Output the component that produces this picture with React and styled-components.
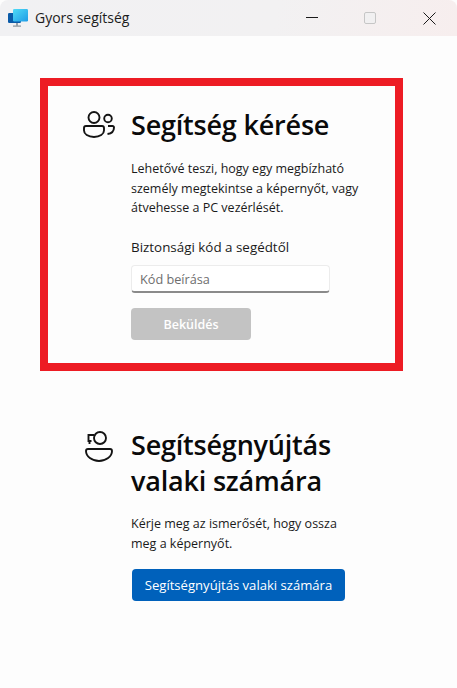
import React from "react";
import styled, { createGlobalStyle } from "styled-components";

const GlobalStyle = createGlobalStyle`
  html, body {
    margin: 0;
    padding: 0;
    background: #fdfdfd;
    font-family: "Open Sans", "Noto Sans", sans-serif;
    color: #1a1a1a;
  }
`;

const Window = styled.div`
  width: 457px;
  height: 688px;
  display: flex;
  flex-direction: column;
  overflow: hidden;
  background: #fdfdfd;
`;

const TitleBar = styled.div`
  height: 36px;
  flex: none;
  display: flex;
  align-items: center;
  padding-left: 8px;
  background: linear-gradient(100deg, #f1f1f3 0%, #f2f1f2 60%, #f7eeee 100%);
  border-top-left-radius: 8px;
  border-top-right-radius: 8px;
`;

const TitleText = styled.span`
  margin-left: 7px;
  margin-top: -1px;
  font-size: 14px;
  color: #1c1c1c;
  flex: 1;
`;

const WinButton = styled.div`
  box-sizing: border-box;
  width: 58px;
  height: 36px;
  display: flex;
  align-items: center;
  justify-content: center;
  &:last-child {
    padding-left: 2px;
  }
`;

const Content = styled.div`
  flex: 1;
  display: flex;
  flex-direction: column;
  padding: 42px 0 0 40px;
`;

const Frame = styled.section`
  box-sizing: border-box;
  width: 363px;
  height: 293px;
  border: 8px solid #ed1c24;
  padding: 21px 0 0 35px;
`;

const PlainSection = styled.section`
  margin-top: 56px;
  padding-left: 43px;
`;

const Row = styled.div`
  display: grid;
  grid-template-columns: 48px 1fr;
`;

const IconCell = styled.div`
  padding-top: ${(p) => p.$top}px;
`;

const Heading = styled.h2`
  margin: 0;
  font-size: 27px;
  line-height: 36px;
  font-weight: 600;
  color: #0a0a0a;
  letter-spacing: -0.2px;
`;

const Body = styled.p`
  margin: ${(p) => p.$top}px 0 0;
  font-size: 12.5px;
  line-height: 19.5px;
  color: #1a1a1a;
`;

const Label = styled.div`
  margin-top: 19.5px;
  font-size: 13.4px;
  line-height: 20px;
  color: #1a1a1a;
`;

const CodeInput = styled.div`
  box-sizing: border-box;
  margin-top: 8px;
  width: 199px;
  height: 28px;
  padding: 0 8px;
  display: flex;
  align-items: center;
  font-size: 12.7px;
  color: #6e6e6e;
  background: #ffffff;
  border: 1px solid #ececec;
  border-bottom: 2px solid #8a8a8a;
  border-radius: 4px;
`;

const Button = styled.div`
  box-sizing: border-box;
  width: ${(p) => p.$width}px;
  height: 32px;
  margin-top: ${(p) => p.$top}px;
  margin-left: ${(p) => (p.$primary ? 1 : 0)}px;
  display: flex;
  align-items: center;
  justify-content: center;
  font-size: ${(p) => (p.$primary ? 13.1 : 12.5)}px;
  font-weight: ${(p) => (p.$primary ? 500 : 600)};
  color: #ffffff;
  background: ${(p) => (p.$primary ? "#0061bb" : "#c3c3c3")};
  border-radius: 4px;
`;

const AppIcon = () => (
  <svg width="20" height="20" viewBox="0 0 20 20">
    <defs>
      <linearGradient id="screenFront" x1="0" y1="0" x2="1" y2="1">
        <stop offset="0" stopColor="#4fdcf7" />
        <stop offset="1" stopColor="#1f9be6" />
      </linearGradient>
    </defs>
    <rect x="0" y="5" width="13" height="10" rx="1.2" fill="#0a5ba8" />
    <rect x="5" y="17.5" width="8" height="1.2" fill="#8a949c" />
    <rect x="8" y="15" width="2" height="3" fill="#98a2aa" />
    <rect x="5" y="1" width="15" height="12.5" rx="1.2" fill="url(#screenFront)" />
  </svg>
);

const MinimizeIcon = () => (
  <svg width="12" height="12" viewBox="0 0 12 12">
    <path d="M0 5.500h12" stroke="#1a1a1a" strokeWidth="1" />
  </svg>
);

const MaximizeIcon = () => (
  <svg width="12" height="12" viewBox="0 0 12 12">
    <rect x="0.5" y="0.5" width="11" height="11" rx="1.5" fill="#f1f0f1" stroke="#c6c6c6" />
  </svg>
);

const CloseIcon = () => (
  <svg width="13" height="13" viewBox="0 0 13 13">
    <path d="M0.5 0.5l12 12M12.5 0.5l-12 12" stroke="#1a1a1a" strokeWidth="1" fill="none" />
  </svg>
);

const PeopleIcon = () => (
  <svg width="32" height="30" viewBox="0 0 32 30" fill="none" stroke="#141414" strokeWidth="1.9">
    <circle cx="11" cy="8.500" r="5.500" />
    <circle cx="25" cy="9.500" r="3.800" />
    <path d="M3 17h16a2 2 0 0 1 2 2v2.500c0 3.500-4 6.500-10 6.500S1 25 1 21.500V19a2 2 0 0 1 2-2z" />
    <path d="M25 17h4.500a1.500 1.500 0 0 1 1.500 1.500c0 3.500-2.500 6-6.500 6.500" />
  </svg>
);

const HelperIcon = () => (
  <svg width="30" height="33" viewBox="0 0 30 33" fill="none" stroke="#141414" strokeWidth="1.9">
    <circle cx="17" cy="8" r="6" />
    <path d="M11 5H5.500v6h3" />
    <path d="M6.500 11v3" />
    <path d="M5 19h22a2 2 0 0 1 2 2c0 5.500-6 10-13 10S3 26.500 3 21a2 2 0 0 1 2-2z" />
  </svg>
);

const App = () => (
  <Window>
    <GlobalStyle />
    <TitleBar>
      <AppIcon />
      <TitleText>Gyors segítség</TitleText>
      <WinButton>
        <MinimizeIcon />
      </WinButton>
      <WinButton>
        <MaximizeIcon />
      </WinButton>
      <WinButton>
        <CloseIcon />
      </WinButton>
    </TitleBar>
    <Content>
      <Frame>
        <Row>
          <IconCell $top={2}>
            <PeopleIcon />
          </IconCell>
          <div>
            <Heading>Segítség kérése</Heading>
            <Body $top={16}>
              Lehetővé teszi, hogy egy megbízható
              <br />
              személy megtekintse a képernyőt, vagy
              <br />
              átvehesse a PC vezérlését.
            </Body>
            <Label>Biztonsági kód a segédtől</Label>
            <CodeInput>Kód beírása</CodeInput>
            <Button $width={120} $top={15}>
              Beküldés
            </Button>
          </div>
        </Row>
      </Frame>
      <PlainSection>
        <Row>
          <IconCell $top={3}>
            <HelperIcon />
          </IconCell>
          <div>
            <Heading>
              Segítségnyújtás
              <br />
              valaki számára
            </Heading>
            <Body $top={15}>
              Kérje meg az ismerősét, hogy ossza
              <br />
              meg a képernyőt.
            </Body>
            <Button $primary $width={213} $top={16}>
              Segítségnyújtás valaki számára
            </Button>
          </div>
        </Row>
      </PlainSection>
    </Content>
  </Window>
);

export default App;
